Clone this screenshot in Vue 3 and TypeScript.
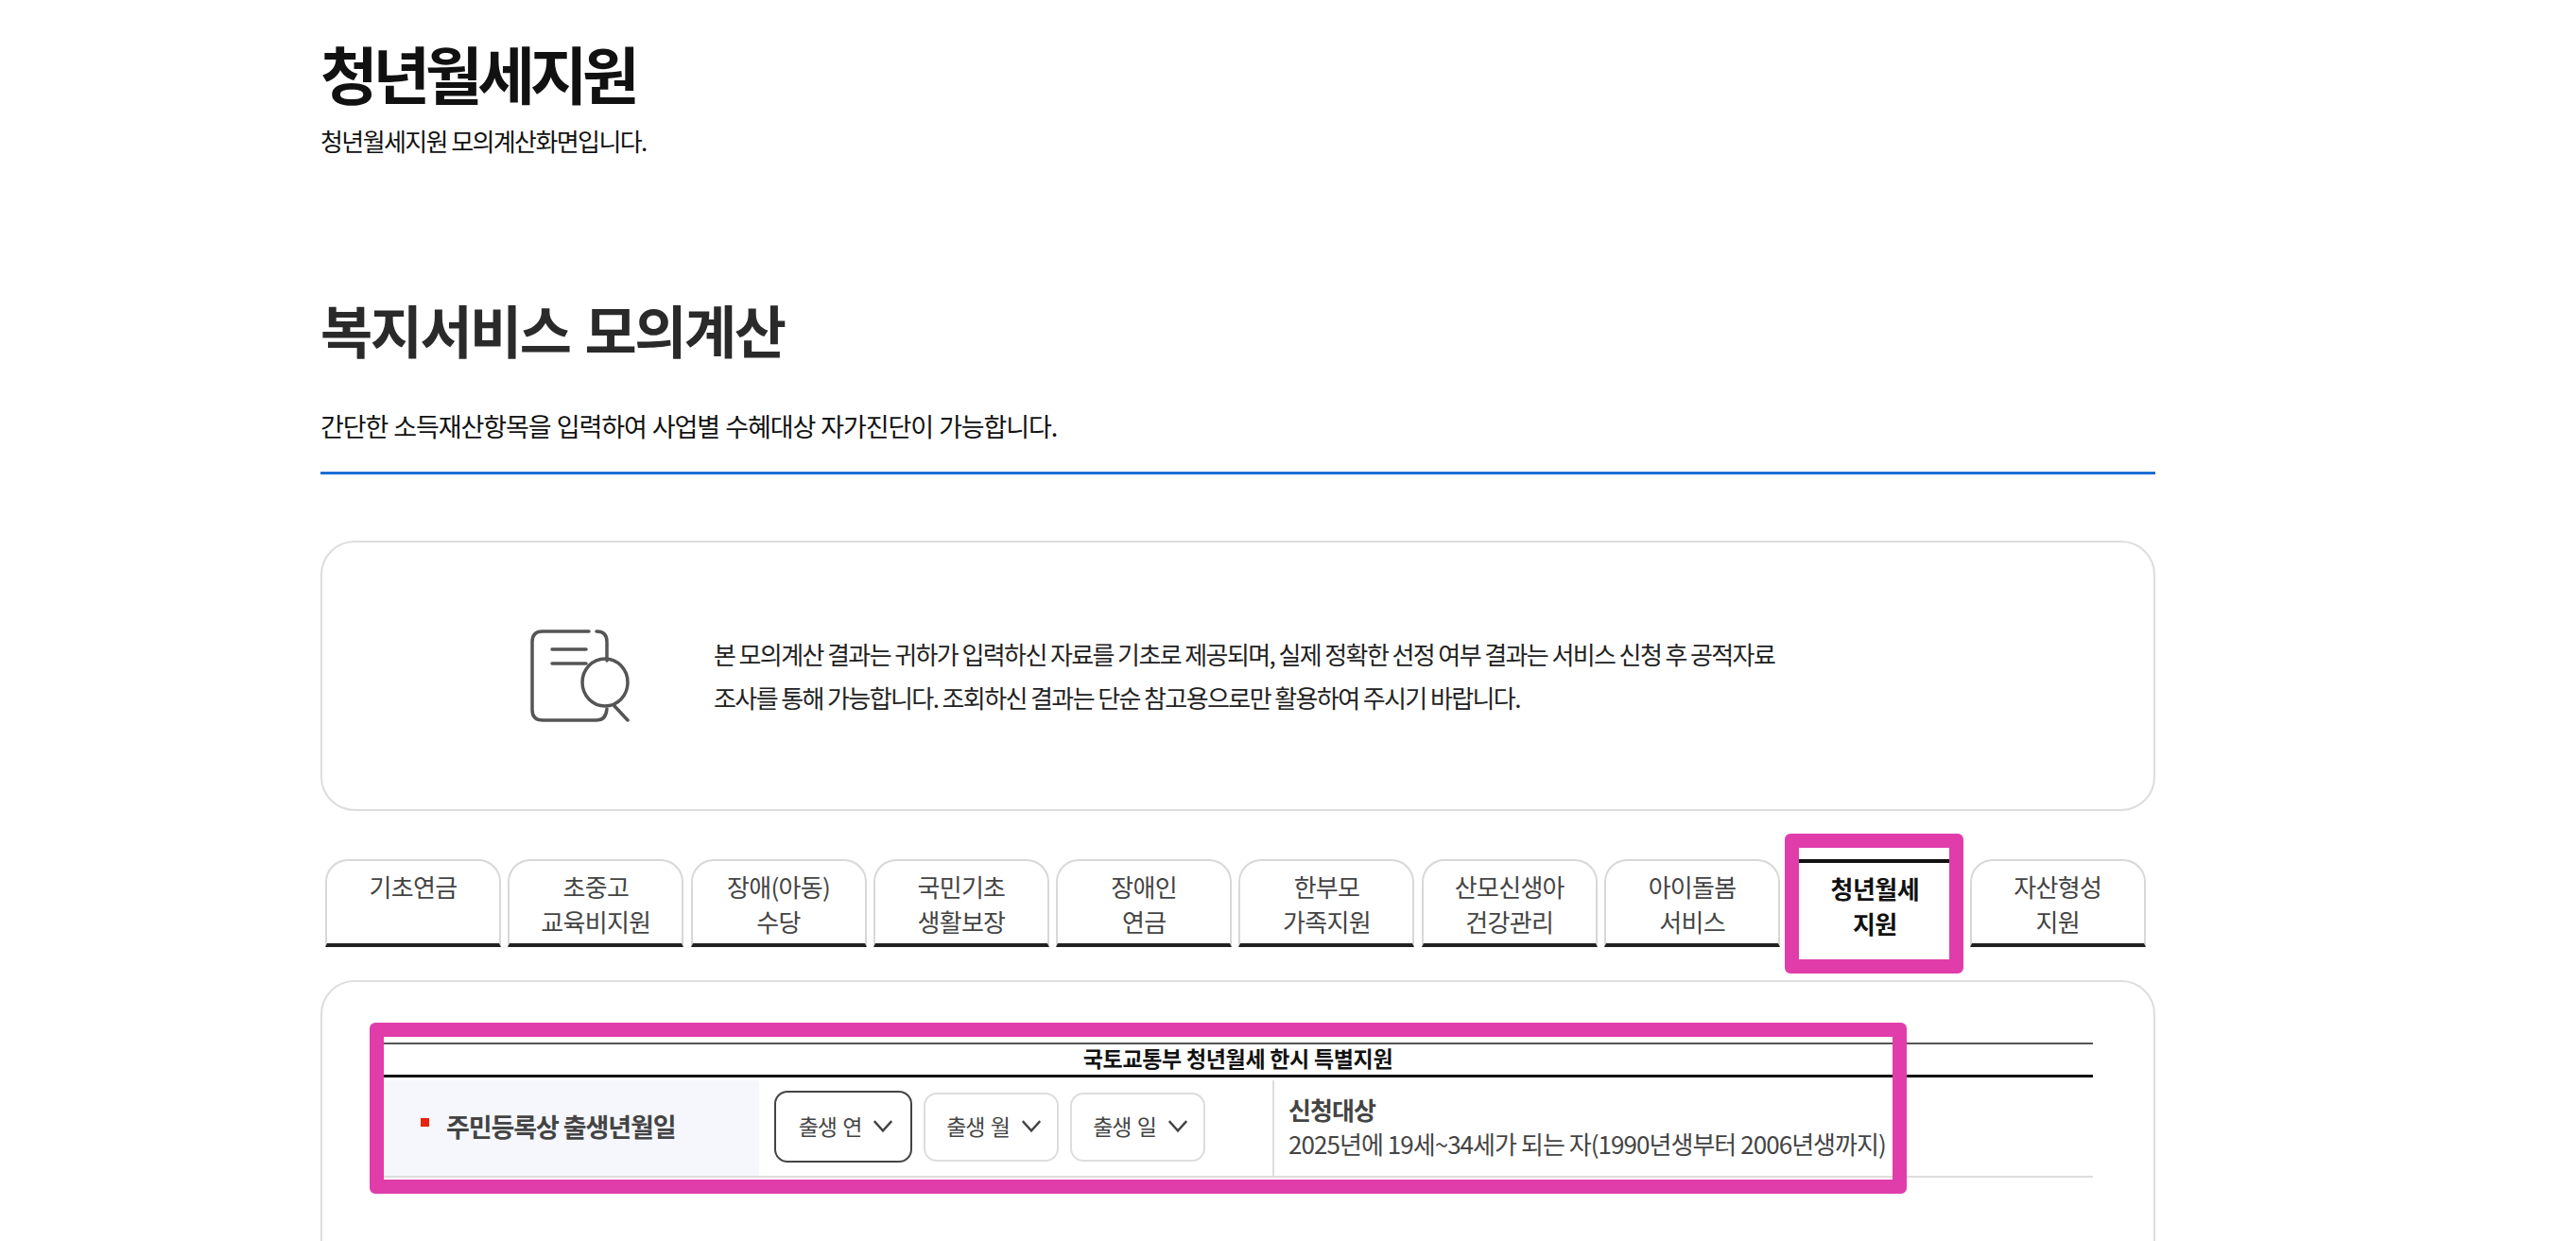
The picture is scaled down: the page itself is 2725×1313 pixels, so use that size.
<script setup lang="ts">
interface Tab {
  lines: string[];
  active?: boolean;
}

const tabs: Tab[] = [
  { lines: ["기초연금"] },
  { lines: ["초중고", "교육비지원"] },
  { lines: ["장애(아동)", "수당"] },
  { lines: ["국민기초", "생활보장"] },
  { lines: ["장애인", "연금"] },
  { lines: ["한부모", "가족지원"] },
  { lines: ["산모신생아", "건강관리"] },
  { lines: ["아이돌봄", "서비스"] },
  { lines: ["청년월세", "지원"], active: true },
  { lines: ["자산형성", "지원"] },
];

const birthSelects = [
  { label: "출생 연", focused: true },
  { label: "출생 월", focused: false },
  { label: "출생 일", focused: false },
];
</script>

<template>
  <div class="page">
    <h1 class="page-title">청년월세지원</h1>
    <p class="page-sub">청년월세지원 모의계산화면입니다.</p>

    <h2 class="section-title">복지서비스 모의계산</h2>
    <p class="section-desc">간단한 소득재산항목을 입력하여 사업별 수혜대상 자가진단이 가능합니다.</p>

    <div class="notice">
      <svg class="notice-icon" viewBox="0 0 106 98" fill="none" stroke="#555" stroke-width="3.5" stroke-linecap="round">
        <path d="M62 2 H13 Q2 2 2 13 V85 Q2 96 13 96 H70 Q80 96 81 84" />
        <path d="M70 2 Q81 2 81 13 V33" />
        <path d="M23 21 H59 M23 36 H59" />
        <ellipse cx="79" cy="56" rx="24" ry="25" />
        <path d="M89 81 L103 96" />
      </svg>
      <p class="notice-text">
        본 모의계산 결과는 귀하가 입력하신 자료를 기초로 제공되며, 실제 정확한 선정 여부 결과는 서비스 신청 후 공적자료<br />
        조사를 통해 가능합니다. 조회하신 결과는 단순 참고용으로만 활용하여 주시기 바랍니다.
      </p>
    </div>

    <ul class="tabs">
      <li v-for="tab in tabs" :key="tab.lines[0]" class="tab" :class="{ active: tab.active }">
        <span v-for="line in tab.lines" :key="line">{{ line }}</span>
      </li>
    </ul>

    <div class="panel">
      <div class="table">
        <div class="table-head">국토교통부 청년월세 한시 특별지원</div>
        <div class="row">
          <div class="row-label"><i class="required"></i>주민등록상 출생년월일</div>
          <div class="row-selects">
            <div v-for="s in birthSelects" :key="s.label" class="select" :class="{ focused: s.focused }">
              {{ s.label }}
              <svg class="chevron" viewBox="0 0 20 12" fill="none" stroke="#444" stroke-width="2.2">
                <path d="M1.5 1 L10 10.5 L18.5 1" />
              </svg>
            </div>
          </div>
          <div class="row-info">
            <strong>신청대상</strong>
            <span>2025년에 19세~34세가 되는 자(1990년생부터 2006년생까지)</span>
          </div>
        </div>
      </div>
    </div>
  </div>
</template>

<style>
html,
body {
  margin: 0;
  background: #fff;
  overflow: hidden;
}
</style>

<style scoped>
.page {
  box-sizing: border-box;
  width: 1941px;
  height: 1313px;
  margin-left: 339px;
  padding-top: 36px;
  overflow: hidden;
  font-family: "Noto Sans CJK KR", "Noto Sans", sans-serif;
  color: #111;
}

.page-title {
  margin: 0;
  font-size: 66px;
  line-height: 80px;
  font-weight: 700;
  letter-spacing: -5.3px;
  color: #111;
}

.page-sub {
  margin: 13px 0 0;
  font-size: 26px;
  line-height: 40px;
  letter-spacing: -1.6px;
}

.section-title {
  margin: 144px 0 0;
  font-size: 60px;
  line-height: 70px;
  font-weight: 700;
  letter-spacing: -2.5px;
  word-spacing: 5px;
  color: #2a2a2a;
}

.section-desc {
  margin: 48px 0 0;
  padding-bottom: 28px;
  border-bottom: 3px solid #1a6fd4;
  font-size: 27px;
  line-height: 40px;
  letter-spacing: -1.1px;
  word-spacing: 1.2px;
}

.notice {
  box-sizing: border-box;
  height: 286px;
  margin-top: 70px;
  padding-left: 220px;
  display: flex;
  align-items: center;
  gap: 88px;
  border: 2px solid #ddd;
  border-radius: 36px;
}

.notice-icon {
  flex: none;
  width: 106px;
  height: 98px;
}

.notice-text {
  margin: 0;
  font-size: 26px;
  line-height: 46px;
  letter-spacing: -1.6px;
  color: #222;
}

.tabs {
  display: flex;
  gap: 7.3px;
  margin: 51px 0 0 5px;
  padding: 0;
  list-style: none;
}

.tab {
  box-sizing: border-box;
  width: 186px;
  height: 93px;
  padding-top: 8px;
  display: flex;
  flex-direction: column;
  align-items: center;
  border: 2px solid #d8d8d8;
  border-bottom: 4px solid #222;
  border-radius: 24px 24px 0 0;
  font-size: 26px;
  line-height: 37px;
  letter-spacing: -0.7px;
  color: #444;
}

.tab.active {
  position: relative;
  border: 0;
  border-top: 4px solid #111;
  border-radius: 0;
  padding-top: 8px;
  font-weight: 700;
  letter-spacing: -0.5px;
  color: #111;
}

.tab.active::after {
  content: "";
  position: absolute;
  inset: -31px -1px -28px -2px;
  border: 15px solid #e03dab;
  border-radius: 6px;
}

.panel {
  box-sizing: border-box;
  height: 400px;
  margin-top: 35px;
  padding: 64px 64px 0;
  border: 2px solid #ddd;
  border-radius: 36px;
}

.table {
  position: relative;
  border-top: 2px solid #555;
}

.table::after {
  content: "";
  position: absolute;
  top: -23px;
  left: -14px;
  width: 1626px;
  height: 181px;
  box-sizing: border-box;
  border: 15px solid #e03dab;
  border-radius: 6px;
}

.table-head {
  height: 32px;
  border-bottom: 3px solid #111;
  text-align: center;
  font-size: 23px;
  line-height: 29px;
  font-weight: 700;
  letter-spacing: -0.3px;
  color: #111;
}

.row {
  display: flex;
  height: 106px;
  padding-top: 3px;
  box-sizing: border-box;
  border-bottom: 2px solid #ddd;
}

.row-label {
  box-sizing: border-box;
  width: 398px;
  padding-left: 67px;
  padding-bottom: 4px;
  position: relative;
  display: flex;
  align-items: center;
  background: #f5f7fc;
  font-size: 27px;
  font-weight: 700;
  letter-spacing: -1.1px;
  color: #444;
}

.required {
  position: absolute;
  left: 40px;
  top: 40px;
  width: 9px;
  height: 9px;
  background: #e8240c;
}

.row-selects {
  box-sizing: border-box;
  width: 543px;
  padding: 0 0 3px 16px;
  display: flex;
  align-items: center;
  gap: 12px;
}

.select {
  box-sizing: border-box;
  width: 143px;
  height: 73px;
  padding: 0 0 2px 6px;
  display: flex;
  align-items: center;
  justify-content: center;
  gap: 12px;
  border: 2px solid #ddd;
  border-radius: 14px;
  font-size: 23px;
  letter-spacing: -1px;
  word-spacing: 2px;
  color: #444;
}

.select.focused {
  width: 146px;
  height: 76px;
  border-color: #444;
}

.chevron {
  width: 22px;
  height: 13px;
}

.row-info {
  flex: 1;
  padding: 0 0 3px 15px;
  display: flex;
  flex-direction: column;
  justify-content: center;
  border-left: 2px solid #ddd;
  font-size: 26px;
  line-height: 36px;
  letter-spacing: -0.95px;
  color: #444;
}

.row-info strong {
  font-weight: 700;
}
</style>
